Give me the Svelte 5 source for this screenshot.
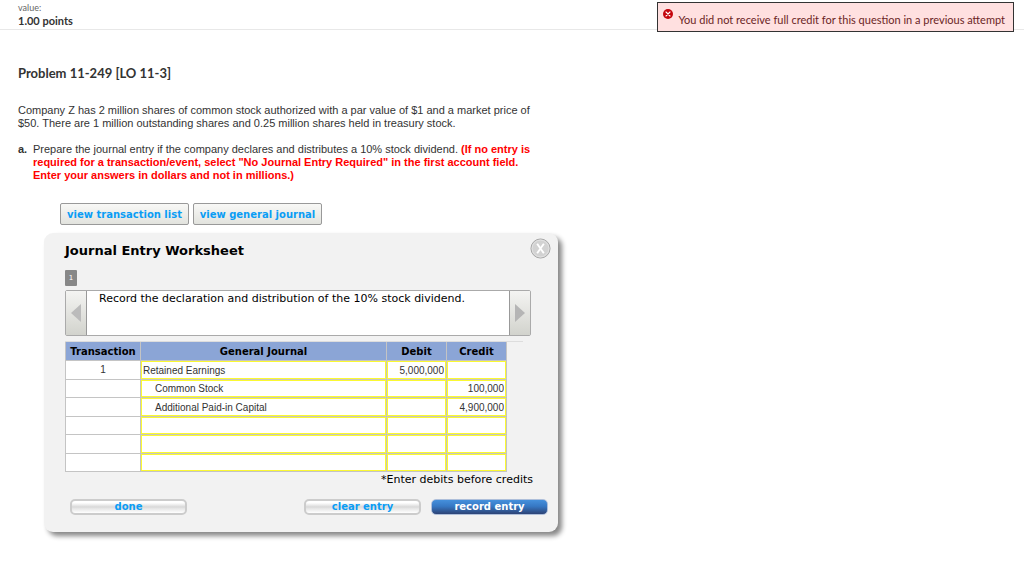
<script>
  const uid = $props.id();

  let rows = $state([
    { no: '1', account: 'Retained Earnings', debit: '5,000,000', credit: '' },
    { no: '', account: 'Common Stock', debit: '', credit: '100,000', indent: true },
    { no: '', account: 'Additional Paid-in Capital', debit: '', credit: '4,900,000', indent: true },
    { no: '', account: '', debit: '', credit: '' },
    { no: '', account: '', debit: '', credit: '' },
    { no: '', account: '', debit: '', credit: '' }
  ]);

  function clearEntry() {
    for (const row of rows) {
      row.account = row.debit = row.credit = '';
      row.indent = false;
    }
  }
</script>

<header>
  <div class="value">value:</div>
  <div class="points">1.00 points</div>
  <div class="alert" role="status">
    <svg viewBox="0 0 10 10" aria-hidden="true">
      <circle cx="5" cy="5" r="5" fill="#c4040c" />
      <path d="M3 3l4 4M7 3l-4 4" stroke="#fff" stroke-width="1.1" stroke-linecap="round" />
    </svg>
    <span>You did not receive full credit for this question in a previous attempt</span>
  </div>
</header>

<main>
  <h1>Problem 11-249 [LO 11-3]</h1>

  <p class="intro">
    Company Z has 2 million shares of common stock authorized with a par value of $1 and a market price of
    $50. There are 1 million outstanding shares and 0.25 million shares held in treasury stock.
  </p>

  <div class="part">
    <b class="letter">a.</b>
    <p>
      Prepare the journal entry if the company declares and distributes a 10% stock dividend.
      <strong>(If no entry is required for a transaction/event, select "No Journal Entry Required" in the first account field. Enter your answers in dollars and not in millions.)</strong>
    </p>
  </div>

  <div class="views">
    <button type="button">view transaction list</button>
    <button type="button">view general journal</button>
  </div>

  <section class="panel">
    <div class="title">
      <h2>Journal Entry Worksheet</h2>
      <button type="button" class="close" aria-label="Close">
        <svg viewBox="0 0 22 22" aria-hidden="true">
          <circle cx="11" cy="11" r="10" fill="#d2d2d2" stroke="#a5a5a5" />
          <circle cx="11" cy="11" r="8.800" fill="none" stroke="#e2e2e2" />
          <path d="M7.500 6L14.500 16M14.500 6L7.500 16" stroke="#fff" stroke-width="2" fill="none" />
        </svg>
      </button>
    </div>

    <button type="button" class="step">1</button>

    <div class="prompt">
      <button type="button" aria-label="Previous transaction">
        <svg viewBox="0 0 10 18" aria-hidden="true"><path d="M10 0v18L0 9z" fill="#bbb" /></svg>
      </button>
      <p>Record the declaration and distribution of the 10% stock dividend.</p>
      <button type="button" aria-label="Next transaction">
        <svg viewBox="0 0 10 18" aria-hidden="true"><path d="M0 0v18l10-9z" fill="#b5b5b5" /></svg>
      </button>
    </div>

    <div class="sheet">
      <table>
        <colgroup>
          <col class="c-no" />
          <col />
          <col class="c-amt" />
          <col class="c-amt" />
        </colgroup>
        <thead>
          <tr>
            <th scope="col">Transaction</th>
            <th scope="col" id="{uid}-account">General Journal</th>
            <th scope="col" id="{uid}-debit">Debit</th>
            <th scope="col" id="{uid}-credit">Credit</th>
          </tr>
        </thead>
        <tbody>
          {#each rows as row}
            <tr>
              <td>{row.no}</td>
              <td><input class:indent={row.indent} bind:value={row.account} aria-labelledby="{uid}-account" /></td>
              <td><input class="amount" bind:value={row.debit} aria-labelledby="{uid}-debit" /></td>
              <td><input class="amount" bind:value={row.credit} aria-labelledby="{uid}-credit" /></td>
            </tr>
          {/each}
        </tbody>
      </table>
    </div>

    <p class="note">*Enter debits before credits</p>

    <div class="actions">
      <button type="button" class="done">done</button>
      <button type="button" onclick={clearEntry}>clear entry</button>
      <button type="button" class="record">record entry</button>
    </div>
  </section>
</main>

<style>
  :global(body) {
    margin: 0;
    background: #fff;
    color: #333;
    font: 11px/13px 'Liberation Sans', Arial, sans-serif;
  }

  h1, h2, p {
    margin: 0;
  }

  button {
    padding: 0;
    font: bold 10px/14px 'DejaVu Sans', Verdana, sans-serif;
    color: #0a9df5;
    cursor: pointer;
  }

  svg {
    display: block;
  }

  header {
    position: relative;
    box-sizing: border-box;
    height: 30px;
    padding: 2px 18px 0;
    border-bottom: 1px solid #e8e8e8;
    font-family: Lato, 'Open Sans', sans-serif;
  }

  .value {
    font-size: 9px;
    line-height: 12px;
    color: #666;
  }

  .points {
    font-size: 11px;
    line-height: 14px;
    font-weight: bold;
  }

  .alert {
    position: absolute;
    top: 2px;
    right: 10px;
    box-sizing: border-box;
    display: flex;
    gap: 5px;
    height: 30px;
    padding: 6px 8px 0 5px;
    border: 1px solid #333;
    background: #ffe0e0;
    color: #6b1f1f;
    font-size: 11px;
    line-height: 22px;
    white-space: nowrap;
  }

  .alert svg {
    width: 10px;
    height: 10px;
  }

  main {
    padding: 33px 18px 24px;
  }

  h1 {
    font: bold 13px/20px Lato, 'Open Sans', sans-serif;
  }

  .intro {
    max-width: 515px;
    margin-top: 21px;
  }

  .part {
    display: flex;
    max-width: 515px;
    margin-top: 13px;
  }

  .letter {
    flex: none;
    width: 15px;
  }

  .part strong {
    color: #f00;
  }

  .views {
    display: flex;
    gap: 4px;
    margin: 21px 0 8px 42px;
  }

  .views button {
    width: 129px;
    height: 22px;
    padding-top: 2px;
    border: 1px solid #999;
    border-radius: 2px;
    background: linear-gradient(#f8f8f6, #e2e3de);
  }

  .panel {
    box-sizing: border-box;
    max-width: 514px;
    margin-left: 26px;
    padding: 5px 7px 17px 21px;
    border-radius: 9px;
    background: #f2f2f2;
    box-shadow: 4px 4px 5px #888;
    color: #000;
    font-family: 'DejaVu Sans', Verdana, sans-serif;
  }

  .title {
    display: flex;
    justify-content: space-between;
  }

  h2 {
    font-size: 13px;
    line-height: 25px;
  }

  .close {
    width: 21px;
    height: 21px;
    border: 0;
    background: none;
  }

  .step {
    display: block;
    width: 12px;
    height: 16px;
    margin-top: 7px;
    border: 0;
    border-radius: 1px;
    background: #888;
    color: #fff;
    font-size: 7px;
    font-weight: normal;
  }

  .prompt {
    display: flex;
    height: 44px;
    margin: 4px 20px 0 0;
    border: 1px solid #aaa;
    border-radius: 2px;
    background: #fff;
  }

  .prompt p {
    flex: 1;
    padding: 1px 12px;
  }

  .prompt button {
    display: grid;
    place-items: center;
    width: 21px;
    border: 0 solid #999;
    border-right-width: 1px;
    background: linear-gradient(#f4f4f2, #d2d3cd);
  }

  .prompt button:last-child {
    border-width: 0 0 0 1px;
  }

  .prompt svg {
    width: 10px;
    height: 18px;
  }

  .sheet {
    margin: 5px 28px 0 0;
    padding-right: 16px;
    border-top: 1px solid #ddd;
  }

  table {
    box-sizing: border-box;
    width: 100%;
    table-layout: fixed;
    border-collapse: separate;
    border-spacing: 0;
    border-left: 1px solid #c4c4c4;
    background: #fff;
  }

  .c-no {
    width: 75px;
  }

  .c-amt {
    width: 60px;
  }

  th,
  td {
    padding: 0;
    border: 0 solid #c4c4c4;
    border-width: 0 1px 1px 0;
  }

  th {
    padding-top: 1px;
    background: #8ba5d6;
    font-size: 10px;
    line-height: 17px;
  }

  td {
    color: #333;
    font: 10px/16px 'Liberation Sans', Arial, sans-serif;
    text-align: center;
  }

  input {
    display: block;
    box-sizing: border-box;
    width: 100%;
    height: 18px;
    padding: 0 1px;
    border: 1px solid #fbf932;
    border-radius: 0;
    background: #fff;
    color: #333;
    font: inherit;
  }

  tr:nth-child(even) input {
    height: 17px;
  }

  .indent {
    padding-left: 13px;
  }

  .amount {
    text-align: right;
  }

  .note {
    margin: 1px 18px 0 0;
    text-align: right;
  }

  .actions {
    display: flex;
    gap: 10px;
    margin: 13px 3px 0 5px;
  }

  .actions button {
    width: 117px;
    height: 16px;
    border: 2px solid #ccc;
    border-radius: 5px;
    background: linear-gradient(#fff 15%, #d8d8d8 50%, #e4e4e4 60%, #fff);
    line-height: 12px;
  }

  .actions .done {
    margin-right: auto;
  }

  .actions .record {
    border: 1px solid #aebfda;
    background: linear-gradient(#4590dc, #3678c4 45%, #2d4375);
    color: #fff;
  }
</style>
